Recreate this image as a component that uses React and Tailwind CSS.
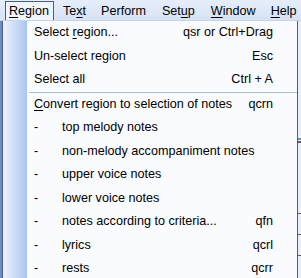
import React from "react";

const U = ({ children }) => <span className="underline underline-offset-[2px]">{children}</span>;

function Row({ label, shortcut, sub }) {
  return (
    <div className="flex items-center h-[23.5px] pr-[24px] whitespace-nowrap">
      {sub ? (
        <>
          <span className="w-[28px]">-</span>
          <span className="flex-1">{label}</span>
        </>
      ) : (
        <span className="flex-1">{label}</span>
      )}
      {shortcut && <span className="text-right">{shortcut}</span>}
    </div>
  );
}

export default function App() {
  return (
    <div
      className="relative w-[301px] h-[278px] overflow-hidden bg-[#d4d0c8] text-black text-[12.6px]"
      style={{ fontFamily: '"Liberation Sans", Arial, sans-serif' }}
    >
      {/* menu bar */}
      <div className="flex items-stretch h-[21px] bg-gradient-to-b from-[#e6eefb] to-[#d6e2f5] border-b border-[#c5d3ea] whitespace-nowrap">
        <div className="ml-[5px] mt-[1px] pl-[3px] pt-[1px] flex items-center bg-[#f0f4fb] border border-b-0 border-[#4b5d7e] w-[49px]">
          <U>R</U>egion
        </div>
        <div className="ml-[9px] pt-[2px] flex items-center">Te<U>x</U>t</div>
        <div className="ml-[15px] pt-[2px] flex items-center">Perform</div>
        <div className="ml-[16px] pt-[2px] flex items-center">Set<U>u</U>p</div>
        <div className="ml-[16px] pt-[2px] flex items-center"><U>W</U>indow</div>
        <div className="ml-[15px] pt-[2px] flex items-center"><U>H</U>elp</div>
      </div>

      {/* background beyond menu */}
      <div className="absolute left-0 top-[21px] w-[3px] h-[257px] bg-[#6b8cc6]" />
      <div className="absolute right-0 top-[21px] w-[4px] h-[257px] bg-[#e9eef8]">
        <div className="mt-[117px] h-[2px] bg-[#6f8fc9]" />
        <div className="mt-[1px] h-[2px] bg-[#5c5c5c]" />
        <div className="mt-[70px] h-[1px] bg-[#5c5c5c]" />
        <div className="mt-[20px] h-[1px] bg-[#5c5c5c]" />
        <div className="mt-[20px] h-[1px] bg-[#5c5c5c]" />
      </div>

      {/* dropdown */}
      <div className="absolute left-[2px] top-[21px] w-[296px] h-[270px] bg-[#fafbfe] border border-[#4b5d7e] border-t-0 flex">
        <div className="w-[24px] shrink-0 bg-gradient-to-r from-[#eef4fd] to-[#a9c6f0]" />
        <div className="flex-1 pl-[7px]">
          <Row label={<>Select <U>r</U>egion...</>} shortcut="qsr or Ctrl+Drag" />
          <Row label="Un-select region" shortcut="Esc" />
          <Row label="Select all" shortcut="Ctrl + A" />
          <div className="h-[1px] bg-[#a8bfe3] ml-[-5px]" />
          <Row label={<><U>C</U>onvert region to selection of notes</>} shortcut="qcrn" />
          <Row sub label="top melody notes" />
          <Row sub label="non-melody accompaniment notes" />
          <Row sub label="upper voice notes" />
          <Row sub label="lower voice notes" />
          <Row sub label="notes according to criteria..." shortcut="qfn" />
          <Row sub label="lyrics" shortcut="qcrl" />
          <Row sub label="rests" shortcut="qcrr" />
        </div>
      </div>
    </div>
  );
}
